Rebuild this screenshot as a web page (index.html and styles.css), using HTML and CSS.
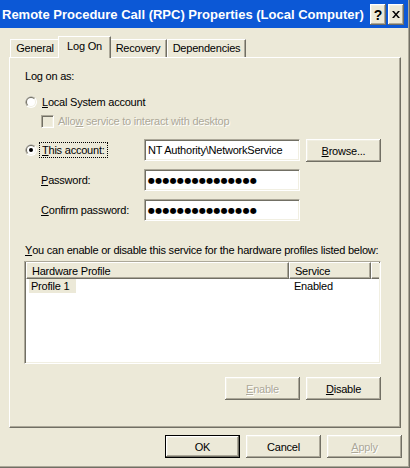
FILE: index.html
```html
<!DOCTYPE html>
<html lang="en">
<head>
<meta charset="utf-8">
<title>Remote Procedure Call (RPC) Properties (Local Computer)</title>
<link rel="stylesheet" href="styles.css">
</head>
<body>
<div class="window">
  <div class="titlebar">
    <span class="title">Remote Procedure Call (RPC) Properties (Local Computer)</span>
    <div class="caption-buttons">
      <span class="cap-btn help">?</span>
      <span class="cap-btn close">
        <svg width="8" height="7" viewBox="0 0 8 7"><path d="M0 0h2l2 2.5 2-2.5h2l-3 3.5 3 3.5h-2l-2-2.5-2 2.5h-2l3-3.5z" fill="#000"/></svg>
      </span>
    </div>
  </div>

  <div class="tabs">
    <span class="tab tab-general">General</span>
    <span class="tab tab-logon active">Log On</span>
    <span class="tab tab-recovery">Recovery</span>
    <span class="tab tab-deps">Dependencies</span>
  </div>

  <div class="panel">
    <div class="content">
      <div class="row row-a">Log on as:</div>

      <div class="row row-b">
        <svg class="radio" width="12" height="12" viewBox="0 0 12 12">
          <circle cx="6" cy="6" r="6" fill="#fff"/>
          <path d="M1.76 10.24A6 6 0 0 1 10.24 1.76Z" fill="#ACA899"/>
          <circle cx="6" cy="6" r="5" fill="#F1EFE2"/>
          <path d="M2.46 9.54A5 5 0 0 1 9.54 2.46Z" fill="#716F64"/>
          <circle cx="6" cy="6" r="4" fill="#fff"/>
        </svg>
        <span class="label"><u>L</u>ocal System account</span>
      </div>

      <div class="row row-c">
        <span class="checkbox"></span>
        <span class="label disabled">Allo<u>w</u> service to interact with desktop</span>
      </div>

      <div class="fields">
        <div class="field-label first">
          <svg class="radio" width="12" height="12" viewBox="0 0 12 12">
            <circle cx="6" cy="6" r="6" fill="#fff"/>
            <path d="M1.76 10.24A6 6 0 0 1 10.24 1.76Z" fill="#ACA899"/>
            <circle cx="6" cy="6" r="5" fill="#F1EFE2"/>
            <path d="M2.46 9.54A5 5 0 0 1 9.54 2.46Z" fill="#716F64"/>
            <circle cx="6" cy="6" r="4" fill="#fff"/>
            <circle cx="6" cy="6" r="2" fill="#000"/>
          </svg>
          <span class="label focus"><u>T</u>his account:</span>
        </div>
        <div class="textbox">NT Authority\NetworkService</div>
        <div class="button"><span><u>B</u>rowse...</span></div>

        <div class="field-label"><u>P</u>assword:</div>
        <div class="textbox pw">&#9679;&#9679;&#9679;&#9679;&#9679;&#9679;&#9679;&#9679;&#9679;&#9679;&#9679;&#9679;&#9679;&#9679;&#9679;</div>
        <div></div>

        <div class="field-label"><u>C</u>onfirm password:</div>
        <div class="textbox pw">&#9679;&#9679;&#9679;&#9679;&#9679;&#9679;&#9679;&#9679;&#9679;&#9679;&#9679;&#9679;&#9679;&#9679;&#9679;</div>
        <div></div>
      </div>

      <div class="row row-info"><u>Y</u>ou can enable or disable this service for the hardware profiles listed below:</div>

      <div class="listview">
        <div class="lv-header">
          <span class="hd hd-profile">Hardware Profile</span>
          <span class="hd hd-service">Service</span>
          <span class="hd hd-fill"></span>
        </div>
        <div class="lv-row">
          <span class="cell cell-profile"><span class="sel">Profile 1</span></span>
          <span class="cell cell-service">Enabled</span>
        </div>
      </div>

      <div class="panel-buttons">
        <div class="button disabled-btn"><span><u>E</u>nable</span></div>
        <div class="button"><span><u>D</u>isable</span></div>
      </div>
    </div>
  </div>

  <div class="dialog-buttons">
    <div class="button default"><span>OK</span></div>
    <div class="button"><span>Cancel</span></div>
    <div class="button disabled-btn"><span><u>A</u>pply</span></div>
  </div>
</div>
</body>
</html>
```

FILE: styles.css
```css
* { box-sizing: border-box; }

html, body {
  margin: 0;
  padding: 0;
  background: #ECE9D8;
}

body {
  font-family: "Liberation Sans", Arial, sans-serif;
  font-size: 11px;
  letter-spacing: -0.22px;
  color: #000;
}

u { text-decoration: underline; text-underline-offset: 1px; }

.window {
  width: 410px;
  height: 468px;
  background: #ECE9D8;
  box-shadow: inset -1px -1px 0 #716F64, inset -2px -2px 0 #ACA899;
  overflow: hidden;
}

/* title bar */
.titlebar {
  width: 408px;
  height: 28px;
  background: #0C58D6;
  display: flex;
  align-items: center;
  justify-content: space-between;
  padding-left: 2px;
  padding-right: 4px;
}

.title {
  color: #fff;
  font-weight: bold;
  font-size: 13px;
  letter-spacing: 0;
  white-space: nowrap;
  overflow: hidden;
  min-width: 0;
}

.caption-buttons {
  display: flex;
  flex: none;
  gap: 2px;
  align-self: flex-start;
  margin-top: 4px;
}

.cap-btn {
  width: 16px;
  height: 21px;
  background: #ECE9D8;
  box-shadow: inset -1px -1px 0 #716F64, inset 1px 1px 0 #fff, inset -2px -2px 0 #ACA899, inset 2px 2px 0 #F1EFE2;
  display: flex;
  align-items: center;
  justify-content: center;
  font-weight: bold;
  font-size: 14px;
  letter-spacing: 0;
}

/* tabs */
.tabs {
  display: flex;
  align-items: flex-end;
  height: 29px;
  padding-left: 10px;
  position: relative;
  z-index: 2;
}

.tab {
  height: 18px;
  display: flex;
  align-items: center;
  justify-content: center;
  border-top: 1px solid #fff;
  border-left: 1px solid #fff;
  border-right: 1px solid #716F64;
  box-shadow: inset -1px 0 0 #ACA899;
  background: #ECE9D8;
  padding-bottom: 1px;
}

.tab-general { width: 50px; }
.tab-logon { width: 53px; }
.tab-recovery { width: 58px; }
.tab-deps { width: 79px; }

.tab.active {
  height: 22px;
  margin: 0 -2px -1px -2px;
  position: relative;
  z-index: 3;
  padding-bottom: 3px;
}

/* panel */
.panel {
  margin-left: 9px;
  width: 392px;
  height: 371px;
  border-top: 1px solid #fff;
  border-left: 1px solid #fff;
  border-right: 1px solid #716F64;
  border-bottom: 1px solid #716F64;
  box-shadow: inset -1px -1px 0 #ACA899;
  padding-left: 15px;
  position: relative;
  z-index: 1;
}

.content {
  width: 356px;
  display: flex;
  flex-direction: column;
}

.row {
  display: flex;
  align-items: center;
}

.row-a { margin-top: 8px; height: 20px; }
.row-b { margin-top: 6px; height: 20px; }
.row-c { height: 18px; padding-left: 16px; }

.radio { flex: none; margin-right: 5px; }

.checkbox {
  width: 13px;
  height: 13px;
  flex: none;
  margin-right: 4px;
  background: #ECE9D8;
  border-top: 1px solid #ACA899;
  border-left: 1px solid #ACA899;
  border-right: 1px solid #fff;
  border-bottom: 1px solid #fff;
  box-shadow: inset 1px 1px 0 #716F64, inset -1px -1px 0 #F1EFE2;
}

.disabled {
  color: #ACA899;
  text-shadow: 1px 1px 0 #fff;
}

.fields {
  margin-top: 9px;
  display: grid;
  grid-template-columns: 113px 156px 75px;
  grid-auto-rows: 22px;
  column-gap: 6px;
  row-gap: 8px;
  align-items: start;
}

.field-label {
  height: 22px;
  display: flex;
  align-items: center;
  padding-left: 16px;
}

.field-label.first { padding-left: 0; }

.focus {
  outline: 1px dotted #000;
  outline-offset: 1px;
  padding: 0 1px;
  margin-left: -1px;
}

.textbox {
  height: 22px;
  background: #fff;
  border-top: 1px solid #ACA899;
  border-left: 1px solid #ACA899;
  border-right: 1px solid #fff;
  border-bottom: 1px solid #fff;
  box-shadow: inset 1px 1px 0 #716F64, inset -1px -1px 0 #F1EFE2;
  padding-left: 3px;
  display: flex;
  align-items: center;
  white-space: nowrap;
  overflow: hidden;
}

.textbox.pw {
  font-size: 8px;
  letter-spacing: 0.3px;
  font-family: "DejaVu Sans", sans-serif;
  padding-left: 3px;
}

.button {
  width: 75px;
  height: 23px;
  background: #ECE9D8;
  box-shadow: inset -1px -1px 0 #716F64, inset 1px 1px 0 #fff, inset -2px -2px 0 #ACA899, inset 2px 2px 0 #F1EFE2;
  display: flex;
  align-items: center;
  justify-content: center;
}

.button.default {
  border: 1px solid #000;
}

.disabled-btn span {
  color: #ACA899;
  text-shadow: 1px 1px 0 #fff;
}

.row-info {
  margin-top: 22px;
  height: 14px;
  white-space: nowrap;
}

/* list view */
.listview {
  margin-top: 4px;
  margin-left: -1px;
  width: 357px;
  height: 103px;
  background: #fff;
  border-top: 1px solid #ACA899;
  border-left: 1px solid #ACA899;
  border-right: 1px solid #fff;
  border-bottom: 1px solid #fff;
  box-shadow: inset 1px 1px 0 #716F64, inset -1px -1px 0 #F1EFE2;
  padding: 0 1px 1px 1px;
}

.lv-header {
  display: flex;
  height: 17px;
}

.hd {
  background: #ECE9D8;
  height: 17px;
  display: flex;
  align-items: center;
  padding-left: 5px;
  border-top: 1px solid #fff;
  border-left: 1px solid #fff;
  border-right: 1px solid #716F64;
  border-bottom: 1px solid #716F64;
  box-shadow: inset -1px -1px 0 #ACA899;
}

.hd-profile { width: 263px; }
.hd-service { width: 82px; }
.hd-fill { flex: 1; border-right: none; box-shadow: inset 0 -1px 0 #ACA899; }

.lv-row {
  display: flex;
  height: 14px;
  align-items: center;
}

.cell-profile { width: 263px; padding-left: 3px; }
.cell-service { padding-left: 5px; }

.sel {
  background: #ECE9D8;
  padding: 1px 7px 1px 2px;
}

.panel-buttons {
  margin-top: 13px;
  display: flex;
  justify-content: flex-end;
  gap: 6px;
}

/* dialog buttons */
.dialog-buttons {
  margin-top: 7px;
  display: flex;
  justify-content: flex-end;
  gap: 6px;
  padding-right: 8px;
}
```
